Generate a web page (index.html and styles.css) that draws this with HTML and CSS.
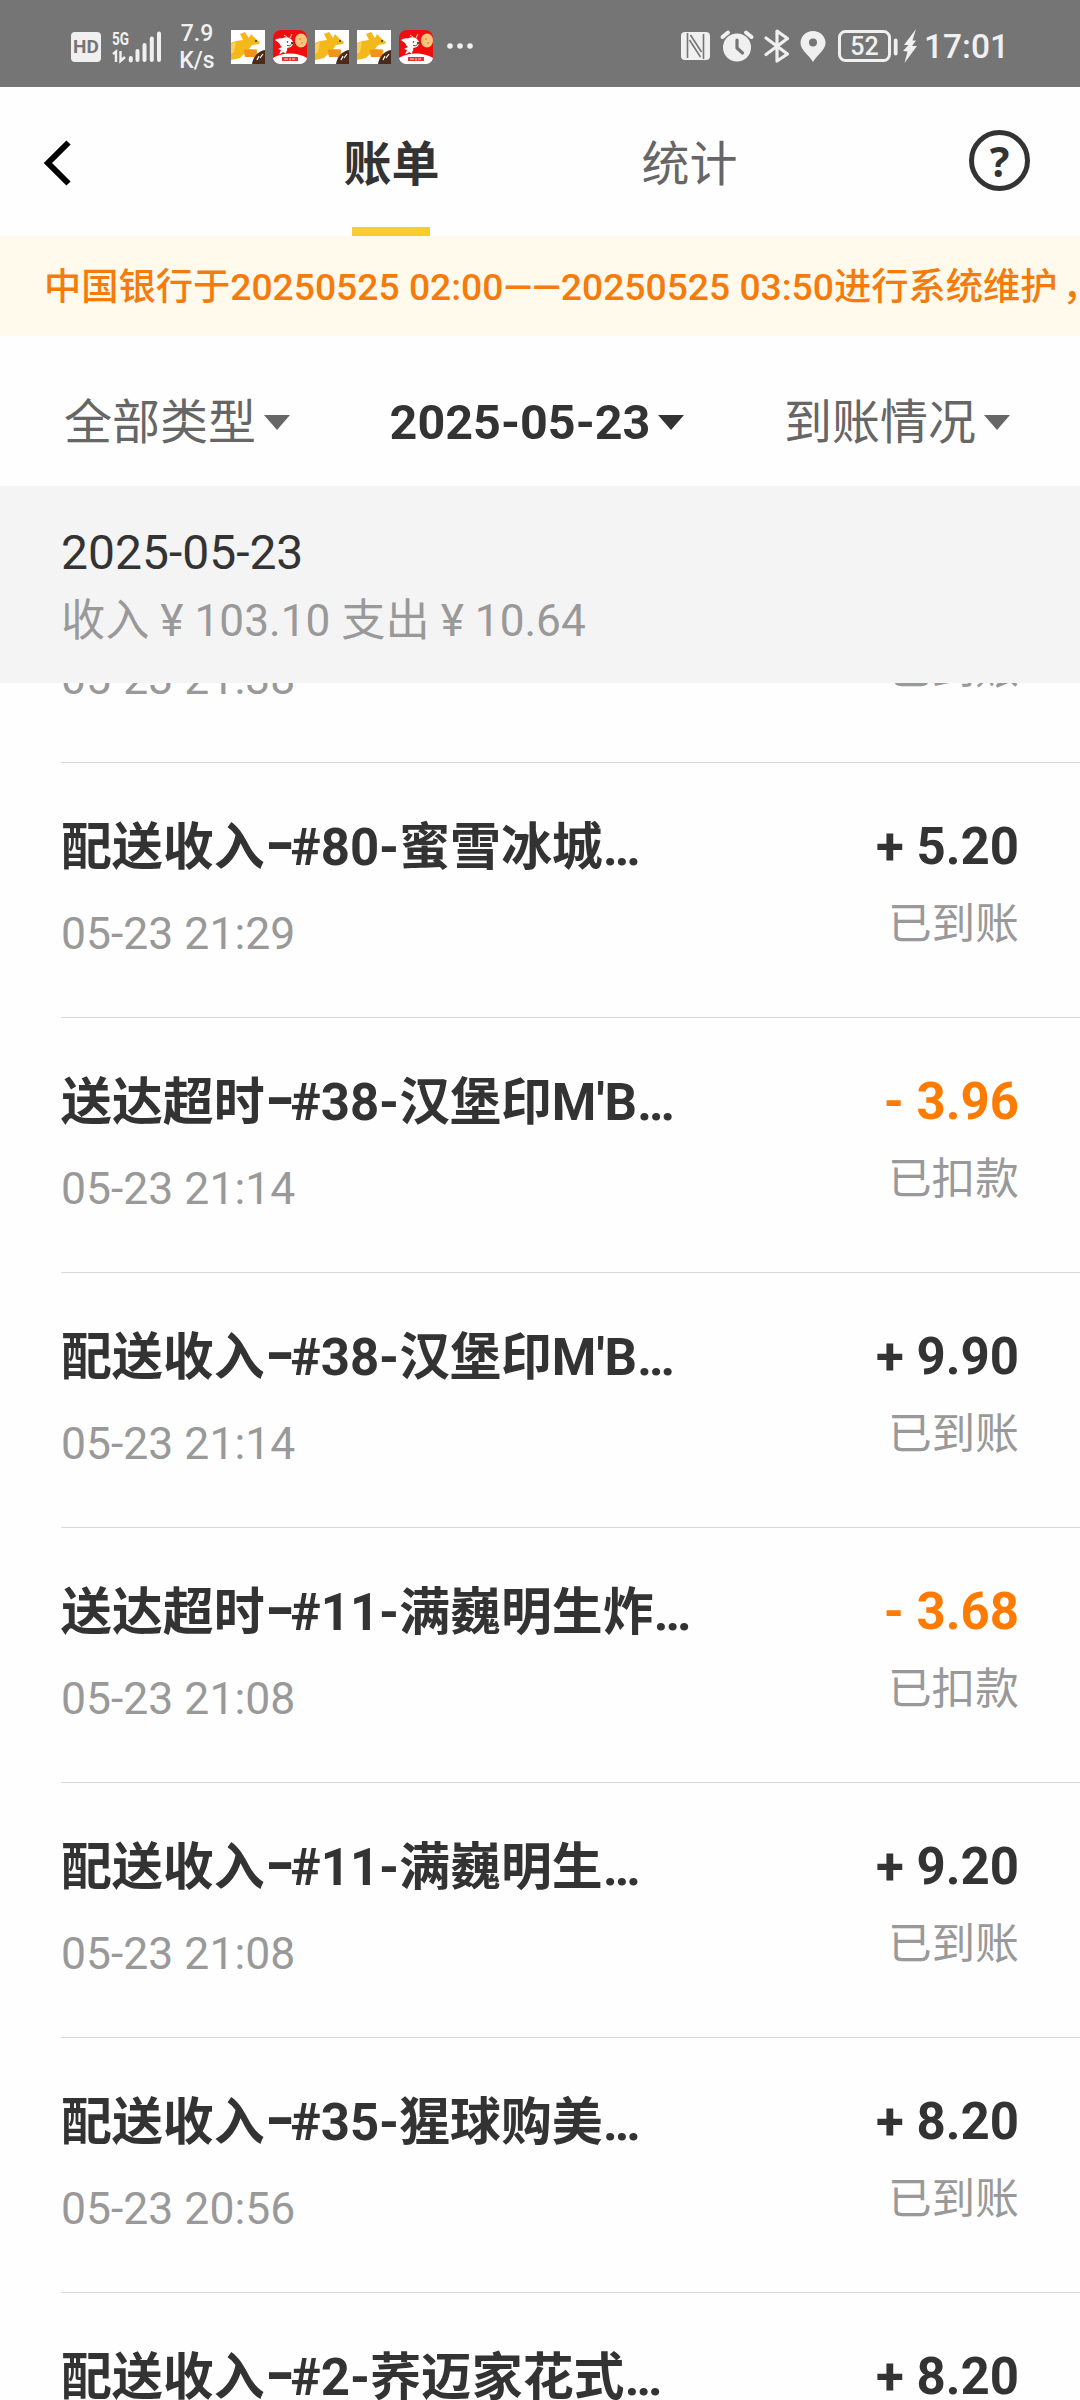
FILE: index.html
```
<!DOCTYPE html>
<html lang="zh-CN">
<head>
<meta charset="utf-8">
<title>账单</title>
<link rel="stylesheet" href="styles.css">
</head>
<body>
<svg class="defs" aria-hidden="true">
  <symbol id="app-roo" viewBox="0 0 34 34">
    <rect width="34" height="34" fill="#fff"/>
    <path d="M0 13 L5 11 L12 10 L9 4 L14 2 L18 8 L20 4 L25 9 L29 12 L28 14 L21 15 L18 19 L26 20 V27 H15 L13 24 L9 28 L0 30 Z" fill="#f5b81a"/>
    <path d="M0 14 L5 12 L3 22 L0 24 Z" fill="#f9d060"/>
    <path d="M13 19.500 H26 L25 27 H14 Z" fill="#f0921c"/>
    <circle cx="25" cy="11" r="1" fill="#3a2a12"/>
    <path d="M34 20 V34 H21 C22 27 27 21 34 20 Z" fill="#4a2a18"/>
    <path d="M26 30 L28 26 M29 28 L32 24" stroke="#fff" stroke-width="1.200"/>
  </symbol>
  <symbol id="app-dog" viewBox="0 0 34 34">
    <rect width="34" height="34" rx="8" fill="#f00d0d"/>
    <path d="M0 28 C9 22 25 22 34 28 C33 32 30 34 26 34 H8 C4 34 1 32 0 28 Z" fill="#fff"/>
    <path d="M2 10 C4 9 6 8 9 8.500 C14 5.500 20 9 20 13 C19.500 17 17 17.500 14 18 C15 20 13 21 13 24 L10.500 22 L6 24.500 L8 20 L5 19 L9 17 C7 16 7 14 6 13 Z" fill="#fff"/>
    <path d="M11 5 L14 7 M19 4 L17 8" stroke="#ffd9c8"/>
    <circle cx="14.500" cy="12" r=".8" fill="#222"/><circle cx="19" cy="13" r="1.100" fill="#222"/>
    <path d="M14 15.500 Q17 16.500 18.500 14.500" stroke="#222" stroke-width=".8" fill="none"/>
    <ellipse cx="28" cy="10.500" rx="6" ry="7" fill="#f6c47c"/>
    <circle cx="27" cy="9" r="1" fill="#dc9a4f"/><circle cx="29" cy="13" r="1" fill="#dc9a4f"/>
    <path d="M9 27 H25 V31 H9 Z" fill="#e5322d"/>
    <path d="M11 29 H15 M17 28 V30.500 M19 29 H22" stroke="#fff" stroke-width=".8"/>
  </symbol>
</svg>

<header class="status">
  <div class="status-left">
    <span class="hd">HD</span>
    <svg class="signal" viewBox="0 0 50 32">
      <text x="0" y="13.500" class="net" textLength="17" lengthAdjust="spacingAndGlyphs">5G</text>
      <path d="M1 23 L4 20.500 V31 M8.500 20 V30 L13 26 " fill="none" stroke="#f0f0f0" stroke-width="2.400"/>
      <path d="M18.800 27V29.500 M25.500 20V29 M32.500 14V29 M39.800 7.500V29 M47 2.500V29" stroke="#f0f0f0" stroke-width="4" stroke-linecap="round"/>
    </svg>
    <span class="speed">7.9<br>K/s</span>
    <div class="apps">
      <svg><use href="#app-roo"/></svg>
      <svg><use href="#app-dog"/></svg>
      <svg><use href="#app-roo"/></svg>
      <svg><use href="#app-roo"/></svg>
      <svg><use href="#app-dog"/></svg>
    </div>
    <svg class="more" viewBox="0 0 26 6"><circle cx="3" cy="3" r="2.800"/><circle cx="13" cy="3" r="2.800"/><circle cx="23" cy="3" r="2.800"/></svg>
  </div>
  <div class="status-right">
    <svg class="sys" viewBox="0 0 220 36">
      <rect x="1" y="4" width="29" height="28" rx="4" fill="#f0f0f0"/>
      <path d="M7.500 5 V30 M9.500 12 L20.500 29 M23.500 31 V6 M21.500 24 L10.500 7" fill="none" stroke="#757575" stroke-width="1.600"/>
      <circle cx="57" cy="19.500" r="14" fill="#f0f0f0"/>
      <path d="M42.500 9 L48 4.500 M66 4.500 L71.500 9" stroke="#f0f0f0" stroke-width="4" stroke-linecap="round"/>
      <path d="M57 12 V20 L62.500 25" fill="none" stroke="#757575" stroke-width="3.200" stroke-linecap="round" stroke-linejoin="round"/>
      <path d="M86 10 L107.500 26 L97 33 V3 L107.500 10.500 L86 26.500" fill="none" stroke="#f0f0f0" stroke-width="3.200" stroke-linecap="round" stroke-linejoin="round"/>
      <path d="M133 34 C129 27 120.500 22 120.500 15 C120.500 8 126 3 133 3 C140 3 145.500 8 145.500 15 C145.500 22 137 27 133 34 Z" fill="#f0f0f0"/>
      <circle cx="133" cy="14.500" r="4" fill="#757575"/>
      <rect x="159.500" y="3.500" width="50" height="29" rx="6" fill="none" stroke="#f0f0f0" stroke-width="3"/>
      <text x="184.500" y="27.300" class="battery" text-anchor="middle">52</text>
      <path d="M215.700 12.500 V25.500" stroke="#f0f0f0" stroke-width="3.800" stroke-linecap="round"/>
    </svg>
    <svg class="bolt" viewBox="0 0 14 34"><path d="M13 0 L1 16 H5.500 L0 22 L4.500 22.500 L1.500 34 L14 17 H9 L13 11.500 H9.500 Z" fill="#f0f0f0"/></svg>
    <span class="clock">17:01</span>
  </div>
</header>

<nav class="nav">
  <svg class="back" viewBox="0 0 28 46"><path d="M25.500 2.500 L5 23 L25.500 43.500" fill="none" stroke="#000" stroke-width="6"/></svg>
  <div class="tabs">
    <div class="tab tab-on">账单</div>
    <div class="tab">统计</div>
  </div>
  <div class="help">?</div>
</nav>

<div class="notice">中国银行于20250525 02:00——20250525 03:50进行系统维护<span class="comma">，</span></div>

<div class="filters">
  <div class="filter">全部类型<i class="caret"></i></div>
  <div class="filter filter-on">2025-05-23<i class="caret"></i></div>
  <div class="filter">到账情况<i class="caret"></i></div>
</div>

<section class="summary">
  <div class="summary-date">2025-05-23</div>
  <div class="summary-total">收入 ¥ 103.10 支出 ¥ 10.64</div>
</section>

<main class="list">
  <div class="row row-first"><div class="info"><div class="title"></div><div class="time">05-23 21:38</div></div><div class="result"><div class="amount"></div><div class="state">已到账</div></div></div>
  <div class="row"><div class="info"><div class="title">配送收入<span class="dash">–</span>#80-蜜雪冰城…</div><div class="time">05-23 21:29</div></div><div class="result"><div class="amount">+ 5.20</div><div class="state">已到账</div></div></div>
  <div class="row"><div class="info"><div class="title">送达超时<span class="dash">–</span>#38-汉堡印M'B…</div><div class="time">05-23 21:14</div></div><div class="result"><div class="amount minus">- 3.96</div><div class="state">已扣款</div></div></div>
  <div class="row"><div class="info"><div class="title">配送收入<span class="dash">–</span>#38-汉堡印M'B…</div><div class="time">05-23 21:14</div></div><div class="result"><div class="amount">+ 9.90</div><div class="state">已到账</div></div></div>
  <div class="row"><div class="info"><div class="title">送达超时<span class="dash">–</span>#11-满巍明生炸…</div><div class="time">05-23 21:08</div></div><div class="result"><div class="amount minus">- 3.68</div><div class="state">已扣款</div></div></div>
  <div class="row"><div class="info"><div class="title">配送收入<span class="dash">–</span>#11-满巍明生…</div><div class="time">05-23 21:08</div></div><div class="result"><div class="amount">+ 9.20</div><div class="state">已到账</div></div></div>
  <div class="row"><div class="info"><div class="title">配送收入<span class="dash">–</span>#35-猩球购美…</div><div class="time">05-23 20:56</div></div><div class="result"><div class="amount">+ 8.20</div><div class="state">已到账</div></div></div>
  <div class="row"><div class="info"><div class="title">配送收入<span class="dash">–</span>#2-荞迈家花式…</div></div><div class="result"><div class="amount">+ 8.20</div></div></div>
</main>
</body>
</html>
```
FILE: styles.css
```
* { box-sizing: border-box; }
body {
  margin: 0;
  width: 1080px;
  height: 2400px;
  overflow: hidden;
  display: flex;
  flex-direction: column;
  background: #fefefe;
  color: #333;
  font-family: Roboto, "Noto Sans CJK SC", sans-serif;
}
svg { display: block; flex: none; overflow: visible; }
.defs { display: none; }

.status {
  flex: none;
  height: 87px;
  background: #757575;
  color: #f0f0f0;
  display: flex;
  justify-content: space-between;
  padding: 0 71px 0 71px;
}
.status-left, .status-right { display: flex; }
.hd {
  width: 30px;
  height: 30px;
  margin-top: 32px;
  border-radius: 4px;
  background: #f0f0f0;
  color: #757575;
  font: 700 19px/30px Roboto, sans-serif;
  text-align: center;
}
.signal { width: 50px; height: 32px; margin: 31px 0 0 11px; }
.net { font: 700 18px Roboto, sans-serif; fill: #f0f0f0; }
.speed { width: 40px; margin: 20px 0 0 15px; font-size: 23px; line-height: 27px; text-align: center; font-weight: 500; }
.apps { display: flex; gap: 8px; margin: 30px 0 0 14px; }
.apps svg { width: 34px; height: 34px; }
.more { width: 26px; height: 6px; margin: 43px 0 0 14px; fill: #f0f0f0; }
.sys { width: 220px; height: 36px; margin-top: 28px; }
.battery { font: 500 25px Roboto, sans-serif; fill: #f0f0f0; }
.bolt { width: 14px; height: 34px; margin: 29px 0 0 3px; }
.clock { margin: 27px 0 0 7px; font-size: 33.500px; line-height: 40px; font-weight: 500; }

.nav {
  flex: none;
  height: 149px;
  display: flex;
  justify-content: space-between;
  padding: 0 50px 0 43px;
}
.back { width: 28px; height: 46px; margin-top: 53px; }
.tabs { display: flex; gap: 202px; margin-left: 41px; }
.tab {
  position: relative;
  height: 149px;
  color: #666;
  font-size: 48px;
  line-height: 155px;
}
.tab-on { color: #333; font-weight: 700; }
.tab-on::after {
  content: "";
  position: absolute;
  left: 9px;
  bottom: 0;
  width: 78px;
  height: 9px;
  background: #fbcc30;
}
.help {
  width: 61px;
  height: 61px;
  margin-top: 43px;
  border: 5px solid #333;
  border-radius: 50%;
  text-align: center;
  font: 700 41px/52px "Noto Sans", sans-serif;
}

.notice {
  flex: none;
  height: 100px;
  padding-left: 44px;
  background: #fffaec;
  color: #f47b0c;
  font-size: 37.250px;
  line-height: 102px;
  font-weight: 500;
  white-space: nowrap;
}
.comma { margin-left: 5px; }

.filters {
  flex: none;
  height: 150px;
  display: flex;
  justify-content: space-between;
  padding: 0 70px 0 64px;
  line-height: 174px;
  font-size: 48px;
  color: #666;
}
.filter { display: flex; gap: 8px; }
.filter-on { color: #333; font-weight: 700; font-size: 48.500px; }
.caret {
  margin-top: 79px;
  height: 0;
  border: 13px solid transparent;
  border-top: 15px solid currentColor;
  border-bottom: 0;
}

.summary {
  flex: none;
  height: 197px;
  padding: 35px 61px 0;
  background: #f4f4f4;
}
.summary-date { font-size: 48px; line-height: 64px; }
.summary-total { font-size: 44.200px; line-height: 73px; color: #999; }

.list { flex: 1; min-height: 0; overflow: hidden; }
.row {
  height: 255px;
  margin-left: 61px;
  padding: 53px 61px 0 0;
  display: flex;
  justify-content: space-between;
  border-bottom: 1px solid #d9d9d9;
}
.row-first { margin-top: -175px; }
.title { height: 64px; font-size: 50.900px; line-height: 64px; font-weight: 700; white-space: nowrap; }
.dash { display: inline-block; width: 26px; transform: scale(.86, 1.2); transform-origin: 0 60%; text-indent: 1px; }
.time { margin-top: 24px; font-size: 44.500px; line-height: 60px; color: #999; }
.result { text-align: right; }
.amount { height: 64px; font-size: 51px; line-height: 62px; font-weight: 700; }
.minus { color: #ff7b00; }
.state { margin-top: 14px; font-size: 43.700px; line-height: 60px; color: #999; }
```
